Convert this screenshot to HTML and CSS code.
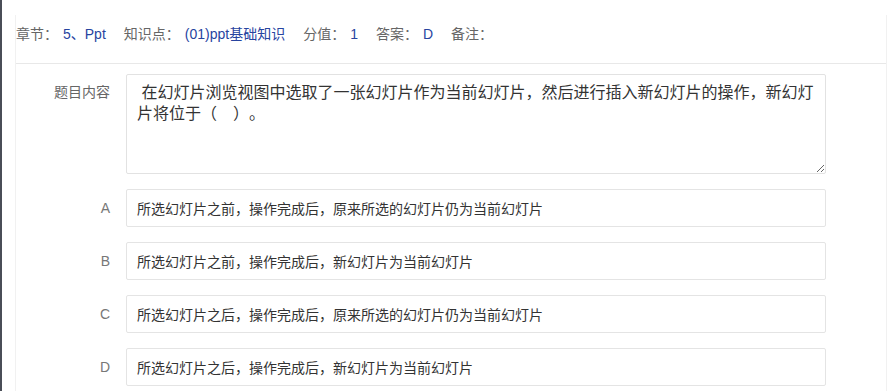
FILE: index.html
```html
<!DOCTYPE html>
<html lang="zh-CN">
<head>
    <meta charset="UTF-8">
    <meta name="viewport" content="width=device-width, initial-scale=1.0">
    <title>题目详情</title>
    <link rel="stylesheet" href="styles.css">
</head>
<body>
    <div class="side"></div>
    <div class="main">
        <div class="panel">
            <div class="meta">
                <span class="meta-item"><span class="meta-label">章节：</span><span class="meta-value">5、Ppt</span></span>
                <span class="meta-item"><span class="meta-label">知识点：</span><span class="meta-value">(01)ppt基础知识</span></span>
                <span class="meta-item"><span class="meta-label">分值：</span><span class="meta-value">1</span></span>
                <span class="meta-item"><span class="meta-label">答案：</span><span class="meta-value">D</span></span>
                <span class="meta-item"><span class="meta-label">备注：</span><span class="meta-value"></span></span>
            </div>

            <form class="question">
                <label class="row-label row-label-top" for="content">题目内容</label>
                <textarea id="content" class="content-box" readonly> 在幻灯片浏览视图中选取了一张幻灯片作为当前幻灯片，然后进行插入新幻灯片的操作，新幻灯片将位于（　）。</textarea>

                <span class="row-label">A</span>
                <div class="option">所选幻灯片之前，操作完成后，原来所选的幻灯片仍为当前幻灯片</div>

                <span class="row-label">B</span>
                <div class="option">所选幻灯片之前，操作完成后，新幻灯片为当前幻灯片</div>

                <span class="row-label">C</span>
                <div class="option">所选幻灯片之后，操作完成后，原来所选的幻灯片仍为当前幻灯片</div>

                <span class="row-label">D</span>
                <div class="option">所选幻灯片之后，操作完成后，新幻灯片为当前幻灯片</div>
            </form>
        </div>
    </div>
</body>
</html>
```

FILE: styles.css
```css
/* Reset básico */
* {
    margin: 0;
    padding: 0;
    box-sizing: border-box;
}
body {
    background-color: #fff;
    color: #333;
    font-family: 'Liberation Sans', 'Noto Sans CJK SC', sans-serif;
    text-spacing-trim: space-all;
    display: flex;
    min-height: 100vh;
    overflow: hidden;
}
.side {
    width: 2px;
    flex-shrink: 0;
    background-color: #4a4e57;
}
.main {
    flex: 1;
    padding: 15px 9px 0 13px;
}
.panel {
    height: 100%;
    border-left: 1px solid #f1f1f1;
    border-right: 1px solid #f1f1f1;
}
.meta {
    display: flex;
    padding: 10px 0 20px 0;
    font-size: 14px;
    line-height: 18px;
    border-bottom: 1px solid #e8e8e8;
}
.meta-item {
    margin-right: 18px;
}
.meta-label {
    color: #666;
    margin-right: 5px;
}
.meta-value {
    color: #27449f;
}
.question {
    display: grid;
    grid-template-columns: 110px 700px;
    row-gap: 15px;
    padding-top: 10px;
    align-items: center;
}
.row-label {
    font-size: 14px;
    color: #777;
    text-align: right;
    padding-right: 16px;
}
.row-label-top {
    align-self: start;
    color: #666;
    padding-top: 8px;
    line-height: 21px;
}
.content-box {
    height: 100px;
    padding: 7px 10px;
    font-family: 'Liberation Sans', 'Noto Sans CJK SC', sans-serif;
    text-spacing-trim: space-all;
    font-size: 16px;
    line-height: 21px;
    color: #333;
    border: 1px solid #e2e2e2;
    border-radius: 2px;
    outline: none;
    resize: vertical;
}
.option {
    height: 38px;
    display: flex;
    align-items: center;
    padding: 0 10px;
    font-size: 14px;
    color: #333;
    border: 1px solid #e4e4e4;
    border-radius: 2px;
}
```
